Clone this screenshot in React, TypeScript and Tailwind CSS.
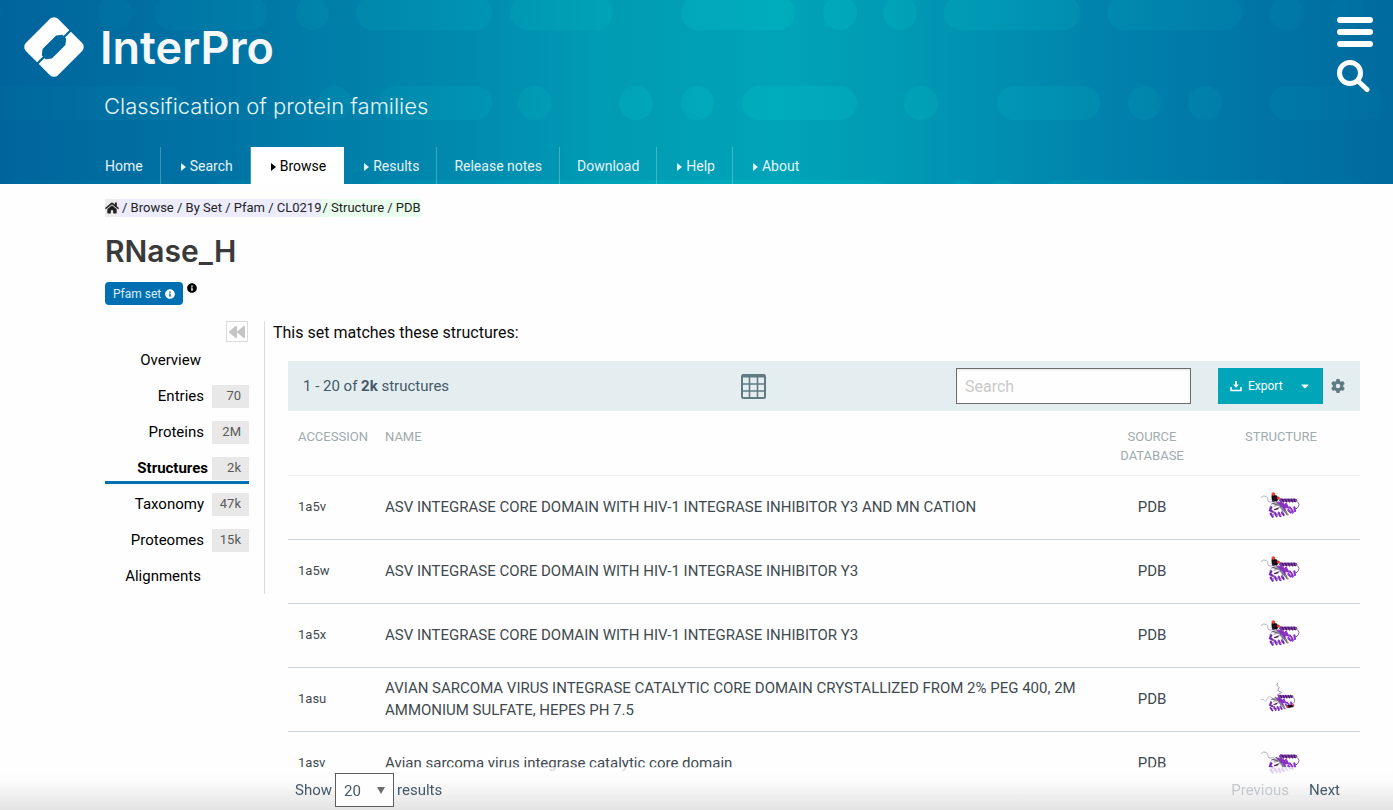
import { useState } from "react";
import { FaBackward, FaCaretDown, FaHome, FaInfoCircle } from "react-icons/fa";
import { FaGear } from "react-icons/fa6";

type Pill = [x: number, width: number];

const topPills: Pill[] = [
  [-40, 42], [98, 33], [154, 113], [296, 33], [356, 136], [510, 103], [681, 114],
  [823, 34], [883, 34], [944, 136], [1107, 135], [1270, 34], [1330, 34],
];
const middlePills: Pill[] = [
  [-40, 223], [318, 33], [380, 112], [518, 33], [619, 34], [681, 33], [742, 115],
  [904, 34], [997, 103], [1128, 33], [1188, 34], [1270, 113],
];
const bottomPills: Pill[] = [[0, 180], [210, 130], [370, 520], [945, 34], [985, 34], [1040, 250], [1310, 60]];

const navItems = [
  { label: "Home" },
  { label: "Search", menu: true },
  { label: "Browse", menu: true, active: true },
  { label: "Results", menu: true },
  { label: "Release notes" },
  { label: "Download" },
  { label: "Help", menu: true },
  { label: "About", menu: true },
];

const sections = [
  { label: "Overview" },
  { label: "Entries", count: "70" },
  { label: "Proteins", count: "2M" },
  { label: "Structures", count: "2k", active: true },
  { label: "Taxonomy", count: "47k" },
  { label: "Proteomes", count: "15k" },
  { label: "Alignments" },
];

type Variant = "inhibitor" | "citrate" | "apo";

const rows: { id: string; name: string; variant: Variant }[] = [
  { id: "1a5v", name: "ASV INTEGRASE CORE DOMAIN WITH HIV-1 INTEGRASE INHIBITOR Y3 AND MN CATION", variant: "inhibitor" },
  { id: "1a5w", name: "ASV INTEGRASE CORE DOMAIN WITH HIV-1 INTEGRASE INHIBITOR Y3", variant: "inhibitor" },
  { id: "1a5x", name: "ASV INTEGRASE CORE DOMAIN WITH HIV-1 INTEGRASE INHIBITOR Y3", variant: "inhibitor" },
  { id: "1asu", name: "AVIAN SARCOMA VIRUS INTEGRASE CATALYTIC CORE DOMAIN CRYSTALLIZED FROM 2% PEG 400, 2M AMMONIUM SULFATE, HEPES PH 7.5", variant: "citrate" },
  { id: "1asv", name: "Avian sarcoma virus integrase catalytic core domain", variant: "apo" },
];

function HeaderPattern() {
  return (
    <svg className="absolute inset-0 h-full w-full" aria-hidden="true">
      <linearGradient id="pill-fade" gradientUnits="userSpaceOnUse" x1="0" x2="1393" y1="0" y2="0">
        <stop offset="0" stopColor="#00c8d0" stopOpacity="0.03" />
        <stop offset="0.35" stopColor="#00c8c8" stopOpacity="0.12" />
        <stop offset="0.55" stopColor="#00d2cd" stopOpacity="0.19" />
        <stop offset="0.75" stopColor="#00c8c8" stopOpacity="0.13" />
        <stop offset="1" stopColor="#00c8d0" stopOpacity="0.03" />
      </linearGradient>
      <g fill="url(#pill-fade)">
        {topPills.map(([x, w]) => <rect key={x} x={x} y={-4} width={w} height={34} rx={17} />)}
        {middlePills.map(([x, w]) => <rect key={x} x={x} y={86} width={w} height={34} rx={17} />)}
        {bottomPills.map(([x, w]) => <rect key={x} x={x} y={180} width={w} height={34} rx={17} />)}
      </g>
    </svg>
  );
}

function Logo() {
  return (
    <svg viewBox="72 50 181 182" className="size-[60px]" aria-hidden="true">
      <mask id="logo-cut">
        <rect x="72" y="50" width="181" height="182" fill="white" />
        <g transform="translate(162.5 141) rotate(-45)" fill="black" stroke="black" strokeLinejoin="round" strokeWidth="6">
          <path d="M-28 -17H28L41 -7V7L28 17H-28L-41 7V-7Z" />
          <path d="M-72 0H72" strokeWidth="7" />
        </g>
      </mask>
      <g mask="url(#logo-cut)">
        <rect x="-69" y="-69" width="138" height="138" rx="17" transform="translate(162.5 141) rotate(45)" fill="white" />
      </g>
    </svg>
  );
}

function Protein({ variant }: { variant: Variant }) {
  return (
    <svg viewBox="0 0 150 150" className="mx-auto block size-[50px]" fill="none" strokeLinecap="round" role="img" aria-label="Structure thumbnail">
      {variant === "citrate" ? (
        <>
          <path d="M16 76q7-1 9 4t7-2q2-12 11-9t9 7 8 2" stroke="#a99bb5" strokeWidth="2" />
          <path d="M64 28q-4 6 2 9t1 8 5 8-3 7 4 8" stroke="#8d7b9c" strokeWidth="2.5" />
        </>
      ) : (
        <path d="M16 46q7-7 14-3 7 5 6 12 1 7 9 5 5-4 10 0" stroke="#a99bb5" strokeWidth="2.5" />
      )}
      <g transform={variant === "citrate" ? "translate(6 20) scale(0.86)" : undefined}>
        <path d="M46 66q10-6 22-2M43 72q-4 10 4 14M72 70q6 6 8 18" stroke="#85769a" strokeWidth="3" />
        <path d="M50 64l20 6 24 28M60 58l22 18 10 16" stroke="#6f6478" strokeWidth="4" />
        <path d="M60 80q8-8 20 0l18 19M54 72l16-2" stroke="#9c8ba8" strokeWidth="3" />
        <path d="M74 52q-2 10 10 16l6 8M68 62l12 10 6 10" stroke="#8730c2" strokeWidth="6" />
        <path d="M74 55H119" stroke="#8038b0" strokeWidth="9" />
        <path d="M78 51l5 9M87 51l5 9M96 51l5 9M105 51l5 9M114 51l4 8" stroke="#43145f" strokeWidth="4" />
        <path d="M119 56q13 6 9 16t-11 9" stroke="#8b6a9d" strokeWidth="3" />
        <path d="M90 66l5 10 7 1M97 84l6 7M106 81l4 11M115 76l2 11" stroke="#8b2ecb" strokeWidth="6.5" />
        <path d="M103 90l5-6M111 91l4-7" stroke="#a264d0" strokeWidth="3" />
        <path d="M46 76l-4 9 8 4M44 95l6 9M56 92l6 10M68 92l5 10M78 91l5 8" stroke="#7824b2" strokeWidth="6.5" />
        <path d="M50 101l6-9M62 101l6-9M73 101l5-9" stroke="#a264d0" strokeWidth="3" />
        <path d="M56 83l10-3" stroke="#3e1554" strokeWidth="4" />
      </g>
      {variant === "inhibitor" && (
        <>
          <path d="M52 42l1 12M59 45l2 7" stroke="#160b14" strokeWidth="11" />
          <circle cx="52" cy="36" r="5.5" fill="#e8463a" />
          <circle cx="67" cy="48" r="4.5" fill="#d92e26" />
          <circle cx="52" cy="56" r="3" fill="#38345f" />
        </>
      )}
      {variant === "citrate" && (
        <>
          <path d="M97 97l12-1" stroke="#1d0c13" strokeWidth="8" />
          <circle cx="94" cy="98" r="3" fill="#d4312a" />
          <circle cx="112" cy="94" r="3" fill="#d4312a" />
        </>
      )}
    </svg>
  );
}

function GridIcon() {
  return (
    <svg viewBox="0 0 25 25" className="size-[25px]" aria-hidden="true">
      <rect x="1" y="1" width="23" height="23" rx="1.5" fill="none" stroke="#607a82" strokeWidth="2" />
      <path d="M1 2H24" stroke="#607a82" strokeWidth="3" />
      <path d="M1 10H24M1 17H24M8.5 3V24M16.5 3V24" stroke="#607a82" strokeWidth="1.6" />
    </svg>
  );
}

function DownloadIcon() {
  return (
    <svg viewBox="0 0 12 12" className="size-3" aria-hidden="true" fill="none" stroke="white" strokeWidth="1.5">
      <path d="M1 7v3.5h10V7" />
      <path d="M6 1v5" strokeWidth="1.8" />
      <path d="M3.2 4.6h5.6L6 7.8z" fill="white" stroke="none" />
    </svg>
  );
}

export default function App() {
  const [query, setQuery] = useState("");
  const [size, setSize] = useState("20");

  return (
    <div className="min-h-screen bg-[#fefefe] font-[Roboto,sans-serif] text-[#0a0a0a]">
      <header className="relative h-[184px] overflow-hidden bg-[linear-gradient(90deg,#00649c_0%,#0074a4_16%,#008aae_33%,#009bb4_43%,#00a4b8_56%,#0098b3_66%,#0081ac_80%,#006a9e_100%)] text-white">
        <HeaderPattern />
        <div className="relative flex h-full justify-between">
          <div className="flex flex-col">
            <div className="flex h-[94px] items-center gap-4 pl-6">
              <Logo />
              <h1 className="font-[Inter,sans-serif] text-[45px] leading-none font-semibold text-[#f5f7f8]">InterPro</h1>
            </div>
            <p className="pl-[104px] font-[Inter,sans-serif] text-[22px] leading-6 font-light text-[#e6f4f8]">Classification of protein families</p>
            <nav className="mt-auto ml-[88px] flex h-[37px]" aria-label="Main">
              {navItems.map((item) => (
                <a
                  key={item.label}
                  href="#"
                  className={`flex items-center gap-1 border-r px-[17px] pt-0.5 text-[14px] last:border-r-0 ${item.active ? "border-white bg-white text-black" : "border-white/25 text-[#e4f3f7]"}`}
                >
                  {item.menu && (
                    <svg viewBox="0 0 5 8" className="ml-[3px] h-2 w-[5px]" aria-hidden="true">
                      <path d="M0 0L5 4L0 8Z" fill="currentColor" />
                    </svg>
                  )}
                  {item.label}
                </a>
              ))}
            </nav>
          </div>
          <div className="flex flex-col items-start gap-3 pt-[17px] pr-5">
            <button type="button" aria-label="Menu" className="flex w-9 flex-col gap-1.5">
              <span className="h-1.5 w-full rounded-full bg-white" />
              <span className="h-1.5 w-full rounded-full bg-white" />
              <span className="h-1.5 w-full rounded-full bg-white" />
            </button>
            <button type="button" aria-label="Search">
              <svg viewBox="0 0 33 33" className="size-[33px]" fill="none" stroke="white" aria-hidden="true">
                <circle cx="13" cy="14" r="10.5" strokeWidth="5" />
                <path d="M21 22l9 8.5" strokeWidth="5" strokeLinecap="round" />
              </svg>
            </button>
          </div>
        </div>
      </header>

      <main className="pr-[33px] pl-[105px]">
        <nav className="flex h-[47px] items-center text-[13px] leading-[18px] text-[#222]" aria-label="Breadcrumb">
          <a href="#" aria-label="Home" className="flex h-[18px] items-center bg-[#ececec]"><FaHome className="size-[14px]" /></a>
          <span className="bg-[#ececfd] pl-[3px] whitespace-pre">/ <a href="#">Browse</a> / <a href="#">By Set</a> / <a href="#">Pfam</a> / <a href="#">CL0219</a></span>
          <span className="bg-[#e9fdec] pl-px whitespace-pre">/ <a href="#">Structure</a> / <a href="#">PDB</a></span>
        </nav>
        <h2 className="font-[Inter,sans-serif] text-3xl leading-10 font-semibold text-[#3a3a3a]">RNase_H</h2>
        <div className="mt-[11px] flex h-[23px] items-start gap-1">
          <span className="flex h-full items-center gap-0.5 rounded bg-[#0070b2] px-2 text-[12px] text-[#dcedf6]">
            Pfam set <FaInfoCircle className="ml-0.5 size-[10px] text-white" />
          </span>
          <FaInfoCircle className="mt-px size-[10px] text-black" />
        </div>

        <div className="mt-4 flex items-start">
          <aside className="flex w-[160px] shrink-0 flex-col border-r border-[#dcdcdc] pr-[15px]">
            <button type="button" aria-label="Collapse menu" className="mr-px flex h-[21px] w-[22px] items-center justify-center self-end border border-[#dcdcdc] text-[#c4c4c4]">
              <FaBackward className="size-4" />
            </button>
            <ul className="text-[15px] text-black">
              {sections.map((s) => (
                <li key={s.label} className="flex h-9 flex-col justify-center">
                  <a
                    href="#"
                    className={`flex h-8 items-center justify-end ${s.active ? "border-b-[3px] border-[#0070b2] pt-[3px] font-bold" : ""} ${s.count ? (s.active ? "gap-1" : "gap-2") : "pr-12"}`}
                  >
                    {s.label}
                    {s.count && (
                      <span className="flex h-[23px] w-[37px] items-center justify-end bg-[#e8e8e8] pr-2 text-[13px] font-normal text-[#5a5a5a]">{s.count}</span>
                    )}
                  </a>
                </li>
              ))}
            </ul>
          </aside>

          <section className="min-w-0 flex-1">
            <p className="pl-2 text-base leading-6">This set matches these structures:</p>
            <div className="mt-4 ml-[23px]">
              <div className="flex h-[50px] items-center bg-[#e4eef0] pr-[15px] pl-[15px]">
                <div className="w-[42%] text-[15px] text-[#44586a]">1 - 20 of <b>2k</b> structures</div>
                <button type="button" aria-label="Table view"><GridIcon /></button>
                <div className="ml-auto flex items-center">
                  <input
                    aria-label="Search structures"
                    placeholder="Search"
                    value={query}
                    onChange={(e) => setQuery(e.target.value)}
                    className="h-9 w-[235px] border border-[#6c6c6c] bg-[#fefefe] px-2 text-base shadow-[inset_0_1px_2px_rgba(10,10,10,0.1)] outline-none placeholder:text-[#cacaca]"
                  />
                  <button type="button" className="ml-[27px] flex h-9 w-[105px] items-center bg-[#00a5b8] px-3 text-[12px] text-white">
                    <DownloadIcon />
                    <span className="ml-1.5">Export</span>
                    <FaCaretDown className="ml-auto size-3" />
                  </button>
                  <button type="button" aria-label="Table settings" className="ml-2 text-[#607a82]"><FaGear className="size-[14px]" /></button>
                </div>
              </div>

              <table className="w-full table-fixed border-collapse text-[#3f4a50]">
                <thead>
                  <tr className="h-16 border-b border-[#f1f1f1] align-top text-[13px] leading-[19px] text-[#a0abae] [&>th]:pt-4 [&>th]:font-normal">
                    <th className="w-[87px] pl-[10px] text-left">ACCESSION</th>
                    <th className="px-[10px] text-left">NAME</th>
                    <th className="w-[100px] px-2 text-center">SOURCE DATABASE</th>
                    <th className="w-[158px] text-center">STRUCTURE</th>
                  </tr>
                </thead>
                <tbody>
                  {rows.map((row) => (
                    <tr key={row.id} className="h-16 border-b border-[#c8d5d8] last:border-[#e8e8e8]">
                      <td className="pl-[10px] text-[13px]"><a href="#">{row.id}</a></td>
                      <td className="px-[10px] text-[15px] leading-[22px]"><a href="#">{row.name}</a></td>
                      <td className="text-center text-[15px]">PDB</td>
                      <td><Protein variant={row.variant} /></td>
                    </tr>
                  ))}
                </tbody>
              </table>
            </div>
          </section>
        </div>
      </main>

      <footer className="fixed inset-x-0 bottom-0 flex h-[43px] items-start justify-between bg-[linear-gradient(180deg,rgba(254,254,254,0.75)_0%,rgba(252,252,252,0.85)_30%,rgba(226,226,226,0.95)_100%)] pt-[6px] pr-[53px] pl-[295px] text-[15px] leading-[34px] text-[#44586a]">
        <label className="flex items-center gap-[3px]">
          Show
          <span className="relative flex items-center">
            <select
              value={size}
              onChange={(e) => setSize(e.target.value)}
              className="h-[34px] w-[59px] appearance-none border border-[#5c5c5c] bg-[#fefefe] pl-2 text-[15px]"
            >
              <option>20</option>
              <option>50</option>
              <option>100</option>
            </select>
            <svg viewBox="0 0 8 7" className="pointer-events-none absolute right-[9px] h-[7px] w-2" aria-hidden="true">
              <path d="M0 0H8L4 7Z" fill="#6c6c6c" />
            </svg>
          </span>
          results
        </label>
        <div className="flex gap-5">
          <button type="button" disabled className="text-[#c4c8cc]">Previous</button>
          <button type="button">Next</button>
        </div>
      </footer>
    </div>
  );
}
